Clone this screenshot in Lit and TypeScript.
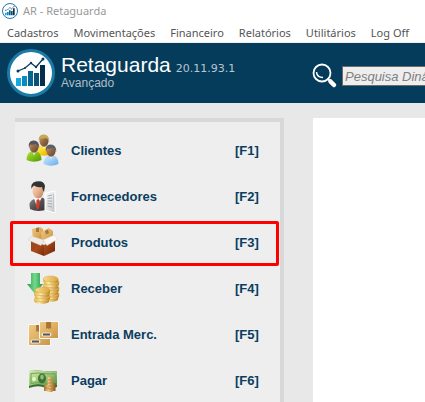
import { LitElement, html, css, svg } from "lit";
import { customElement, property } from "lit/decorators.js";

const person = (x: number, y: number, hair: string, body: string) => svg`
  <g transform="translate(${x} ${y})">
    <path d="M-7.500 14 Q-7.500 7.500 -3 5.500 L3 5.500 Q7.500 7.500 7.500 14 Q0 17.500 -7.500 14Z" fill="url(#${body})"/>
    <path d="M-2 5 L0 9.500 L2.500 5Z" fill="#f4ead8"/>
    <ellipse cx="0" cy="1.200" rx="4.500" ry="5.500" fill="url(#skin)"/>
    <path d="M-5 2 Q-6.500 -4.500 -1 -5.500 Q5.500 -6 5.200 2 Q4 -1.500 2 -2 Q-2 -1 -3.800 -1.500Z" fill="${hair}"/>
  </g>`;

const grad = (id: string, a: string, b: string, c: string) => svg`
  <linearGradient id=${id} x1="0" y1="0" x2="1" y2="1">
    <stop offset="0" stop-color=${a}/><stop offset=".5" stop-color=${b}/><stop offset="1" stop-color=${c}/>
  </linearGradient>`;

const coins = (x: number, bottom: number, n: number, rx: number) =>
  Array.from({ length: n }, (_, i) => {
    const cx = x + (i % 2 ? 0.6 : -0.3);
    const cy = bottom - i * 3;
    return svg`
      <path d="M${cx - rx} ${cy} v2 a${rx} 3 0 0 0 ${rx * 2} 0 v-2Z" fill="url(#coinSide)"/>
      <ellipse cx=${cx} cy=${cy} rx=${rx} ry="3" fill="url(#coinTop)" stroke="#cf9c3c" stroke-width=".4"/>`;
  });

const carton = (x: number, y: number, w: number, h: number) => svg`
  <rect x=${x - 1} y=${y - 1} width=${w + 2} height=${h + 2} rx="1" fill="#faf8f4"/>
  <rect x=${x} y=${y} width=${w} height=${h} rx=".5" fill="url(#card)"/>
  <path d="M${x + w * 0.34} ${y} h5 v7 l-1.200 -1 l-1.300 1 l-1.300 -1 l-1.200 1Z" fill="#a97632"/>
  <rect x=${x + 1.5} y=${y + h - 5.5} width="10" height="4" rx="2" fill="#f1e6d0"/>
  <rect x=${x + 3} y=${y + h - 4.5} width="7" height="2" fill="#555"/>`;

const icons: Record<string, unknown> = {
  clientes: svg`
    <defs>
      ${grad("skin", "#c79a6c", "#8f6745", "#5f4432")}
      ${grad("yellow", "#fff27a", "#f8d313", "#dca800")}
      ${grad("green", "#b4e03c", "#7fbf18", "#4f9010")}
      ${grad("blue", "#cfe9ff", "#9ccdf7", "#6aa9e6")}
    </defs>
    ${person(17, 5, "#c9a650", "yellow")}
    ${person(7, 11, "#55555a", "green")}
    ${person(24, 15, "#5b6066", "blue")}`,
  fornecedores: svg`
    <defs>
      ${grad("face", "#fbd9be", "#eab592", "#b87a5a")}
      ${grad("suit", "#8d8d8d", "#505050", "#2f2f2f")}
      ${grad("paper", "#ffffff", "#e4e4e4", "#bfc3c6")}
    </defs>
    <path d="M3 28 Q1 20 7 18 L14 16 Q21 18 21 28 Q11 32 3 28Z" fill="url(#suit)"/>
    <path d="M7 17 L10 26 L15 16Z" fill="#fff"/>
    <path d="M9.500 19 l2 -1 l1.500 2 l-1 7 l-1.500 2 l-1.500 -3Z" fill="#cf3a2c"/>
    <ellipse cx="11" cy="10" rx="5.500" ry="7.500" fill="url(#face)"/>
    <path d="M4.500 8 Q3 2 9 0.500 Q17 -1 18 5 L17 11 Q15.500 9 15 6 Q10 7 7 4.500 Q5 6 4.500 8Z" fill="#333"/>
    <path d="M18 12 L28 10 L28 32 L18 29Z" fill="url(#paper)" stroke="#fff"/>
    <path d="M20.500 15 L25 14 M20.500 17.500 L25 17 M20.500 20 L25 20 M20.500 22.500 L25 23 M20.500 25 L25 26" stroke="#a6aaad"/>
    <path d="M26.500 13 V28" stroke="#c4c7c9"/>`,
  produtos: svg`
    <defs>
      ${grad("card", "#edc983", "#dfb063", "#c48d3d")}
      ${grad("front", "#b8561f", "#963c12", "#6b2408")}
      ${grad("side", "#9a431a", "#a64a1b", "#7a2c0b")}
    </defs>
    <path d="M5 2 L13 0 L16 2 L16 13 L6 13Z" fill="url(#card)"/>
    <path d="M9 1 L12 0.500 L12 5 L9 5Z" fill="#a3783b"/>
    <path d="M14 5 L22 1 L26 4 L26 13 L15 15Z" fill="url(#card)"/>
    <path d="M18 4 L21 2.500 L22 6 L19 7.500Z" fill="#a3783b"/>
    <path d="M4 13 L17 18 L17 29 L4 24Z" fill="url(#side)"/>
    <path d="M17 18 L28 13 L28 24 L17 29Z" fill="url(#front)"/>
    <path d="M4 9 L17 13 L14 18.500 L1 13Z" fill="#efebe6" stroke="#d5cdc5" stroke-width=".5"/>
    <path d="M27 8 L31 12 L20 18.500 L16 13Z" fill="#faf8f5" stroke="#d5cdc5" stroke-width=".5"/>`,
  receber: svg`
    <defs>
      <linearGradient id="arrow"><stop offset="0" stop-color="#2b9d50"/><stop offset=".5" stop-color="#74d98b"/><stop offset="1" stop-color="#229344"/></linearGradient>
      <linearGradient id="coinSide"><stop offset="0" stop-color="#dfa73b"/><stop offset=".35" stop-color="#fff0ae"/><stop offset="1" stop-color="#b77a1d"/></linearGradient>
      <linearGradient id="coinTop"><stop offset="0" stop-color="#f8dd8c"/><stop offset="1" stop-color="#dca63e"/></linearGradient>
    </defs>
    ${coins(24, 24, 7, 7.5)}
    <path d="M4 0 H13 V11 H16 L8 21 L0 11 H4Z" fill="url(#arrow)"/>
    ${coins(15, 26, 4, 7.5)}`,
  entrada: svg`
    <defs>${grad("card", "#edc983", "#dfb063", "#c9964a")}</defs>
    ${carton(2, 6, 21, 20)}
    ${carton(13, 3, 18, 16)}`,
  pagar: svg`
    <defs>
      ${grad("bill", "#d7efad", "#9cc777", "#4f8a3c")}
      <linearGradient id="bronze"><stop offset="0" stop-color="#a8702c"/><stop offset=".4" stop-color="#f0cc84"/><stop offset="1" stop-color="#8a5318"/></linearGradient>
    </defs>
    <path d="M2 6 Q10 5 17 6 T30 6 L30 22 Q22 24 16 22 T2 23Z" fill="#376d2d"/>
    <path d="M2 6 Q10 5 17 6 T30 6 L30 20 Q22 22 16 20 T2 21Z" fill="url(#bill)"/>
    <path d="M4 8.500 Q11 7.500 17 8.500 T28 8.500 V18 Q21 19 16 18 T4 18.500Z" fill="none" stroke="#6da257"/>
    <circle cx="7" cy="14" r="2" fill="#e8f6cc"/>
    <ellipse cx="15" cy="13.500" rx="4" ry="5" fill="#3d7436"/>
    <ellipse cx="15" cy="12" rx="1.800" ry="2.500" fill="#8fbe75"/>
    <path d="M17 20 h5 v6 h-5Z M20.500 12 h5 v15 h-5Z M24.500 18 h4 v8 h-4Z" fill="url(#bronze)"/>
    <path d="M17 23 h5 M21 15 h4 M21 18 h4 M21 21 h4 M21 24 h7" stroke="#a87030" stroke-width=".6"/>`,
};

const logo = html`
  <svg viewBox="0 0 48 48" aria-hidden="true">
    <circle cx="24" cy="24" r="22.500" fill="#fff" stroke="#1b7ba8" stroke-width="3"/>
    <path d="M9 29h5v8h-5z" fill="#18a8e0"/>
    <path d="M15 27h5v10h-5z" fill="#0b8bc2"/>
    <path d="M21 22h5v15h-5z" fill="#07668f"/>
    <path d="M27 24h5v13h-5z" fill="#0a527a"/>
    <path d="M33 16h5v21h-5z" fill="#062f4b"/>
    <path d="M11 22 L18 19 L24 14 L29 18 L36 10" fill="none" stroke="#0a3a58" stroke-width="1.300"/>
    <g fill="#0a3a58"><circle cx="11" cy="22" r="1.500"/><circle cx="18" cy="19" r="1"/><circle cx="24" cy="14" r="1.200"/><circle cx="29" cy="18" r="1.200"/><circle cx="36" cy="10" r="1.500"/></g>
  </svg>`;

@customElement("shortcut-row")
class ShortcutRow extends LitElement {
  @property() label = "";
  @property() hotkey = "";
  @property() icon = "";
  @property({ type: Boolean }) marked = false;

  static styles = css`
    :host { display: block; position: relative; }
    .row {
      display: flex; align-items: center; gap: 12px;
      width: 100%; height: 46px; padding: 0 0 0 12px;
      border: 0; background: none; text-align: left;
      font: bold 13px/16px "Liberation Sans", Arial, sans-serif;
      color: #0a3d5e;
    }
    .icon { flex: none; width: 32px; height: 32px; overflow: visible; }
    .label { flex: 1; }
    .key { flex: none; width: 45px; }
    .mark {
      position: absolute; inset: 1px 1px 0 -5px;
      border: 3px solid #ff0000; border-radius: 2px;
      pointer-events: none;
    }
  `;

  render() {
    return html`
      <button class="row">
        <svg class="icon" viewBox="0 0 32 32" aria-hidden="true">${icons[this.icon]}</svg>
        <span class="label">${this.label}</span>
        <span class="key">[${this.hotkey}]</span>
      </button>
      ${this.marked ? html`<span class="mark"></span>` : ""}`;
  }
}

@customElement("app-root")
class AppRoot extends LitElement {
  static styles = css`
    :host {
      display: flex; flex-direction: column;
      min-height: 100vh; overflow: hidden; background: #e8e8e8;
      font-family: "Liberation Sans", Arial, sans-serif;
    }
    .titlebar {
      display: flex; align-items: center; gap: 5px;
      height: 22px; padding: 0 2px; background: #fff;
      font: 11px/16px "Noto Sans", sans-serif; color: #999;
    }
    .titlebar svg { width: 16px; height: 16px; }
    .menu {
      display: flex; gap: 15px; height: 18px; padding: 2px 7px 0;
      background: #fff; border-bottom: 1px solid #f0f0f0;
    }
    .menu button {
      flex: none; padding: 0; border: 0; background: none;
      font: 11px/18px "Noto Sans", sans-serif; color: #555;
    }
    .header {
      display: flex; align-items: center;
      height: 60px; padding-left: 7px; background: #053c5c;
    }
    .logo { flex: none; width: 48px; height: 48px; }
    .logo svg { display: block; }
    .brand { flex: none; width: 251px; margin-left: 6px; padding-bottom: 4px; }
    .line { display: flex; align-items: baseline; gap: 5px; }
    h1 { margin: 0; font-size: 21px; line-height: 22px; font-weight: 400; color: #fff; }
    .version { font: 11px/16px "DejaVu Sans", sans-serif; color: #b9c6ce; }
    .edition { margin: 0; font-size: 12px; line-height: 12px; color: #b0bec7; }
    .find { display: flex; flex: 1; align-items: center; gap: 4px; padding-top: 6px; }
    .lens { flex: none; width: 26px; height: 26px; }
    .search {
      flex: 1 0 200px; box-sizing: border-box; height: 20px;
      padding: 0 2px; border: 1px solid #6c6c6c; border-radius: 0;
      background: #eee; font: italic 13px/18px "Liberation Sans", Arial, sans-serif;
    }
    .search::placeholder { color: #808080; opacity: 1; }
    .body { display: flex; flex: 1; gap: 29px; padding: 15px 0 0 15px; }
    .side {
      flex: none; box-sizing: border-box; width: 269px; padding-top: 6px;
      border: solid #d8d8d8; border-width: 4px 4px 0 0; background: #eee;
    }
    .content { flex: 1; background: #fff; }
  `;

  private menus = ["Cadastros", "Movimentações", "Financeiro", "Relatórios", "Utilitários", "Log Off"];
  private shortcuts = [
    ["Clientes", "F1", "clientes"],
    ["Fornecedores", "F2", "fornecedores"],
    ["Produtos", "F3", "produtos"],
    ["Receber", "F4", "receber"],
    ["Entrada Merc.", "F5", "entrada"],
    ["Pagar", "F6", "pagar"],
  ];

  render() {
    return html`
      <div class="titlebar">${logo}<span>AR - Retaguarda</span></div>
      <nav class="menu">${this.menus.map((m) => html`<button>${m}</button>`)}</nav>
      <header class="header">
        <div class="logo">${logo}</div>
        <div class="brand">
          <div class="line"><h1>Retaguarda</h1><span class="version">20.11.93.1</span></div>
          <p class="edition">Avançado</p>
        </div>
        <div class="find">
          <svg class="lens" viewBox="0 0 26 26" aria-hidden="true">
            <circle cx="10" cy="10" r="8.500" fill="none" stroke="#fff" stroke-width="1.800"/>
            <path d="M4.500 9 Q5 14.500 11 14.500" fill="none" stroke="#fff" stroke-width="1.500"/>
            <path d="M15.500 15.500 L18 18" stroke="#fff" stroke-width="2"/>
            <path d="M18.500 18.500 L22 22" stroke="#fff" stroke-width="4.500" stroke-linecap="round"/>
          </svg>
          <input class="search" type="text" placeholder="Pesquisa Dinâmica" aria-label="Pesquisa Dinâmica">
        </div>
      </header>
      <div class="body">
        <nav class="side">
          ${this.shortcuts.map(([label, key, icon]) => html`
            <shortcut-row .label=${label} .hotkey=${key} .icon=${icon} .marked=${key === "F3"}></shortcut-row>`)}
        </nav>
        <main class="content"></main>
      </div>`;
  }
}
